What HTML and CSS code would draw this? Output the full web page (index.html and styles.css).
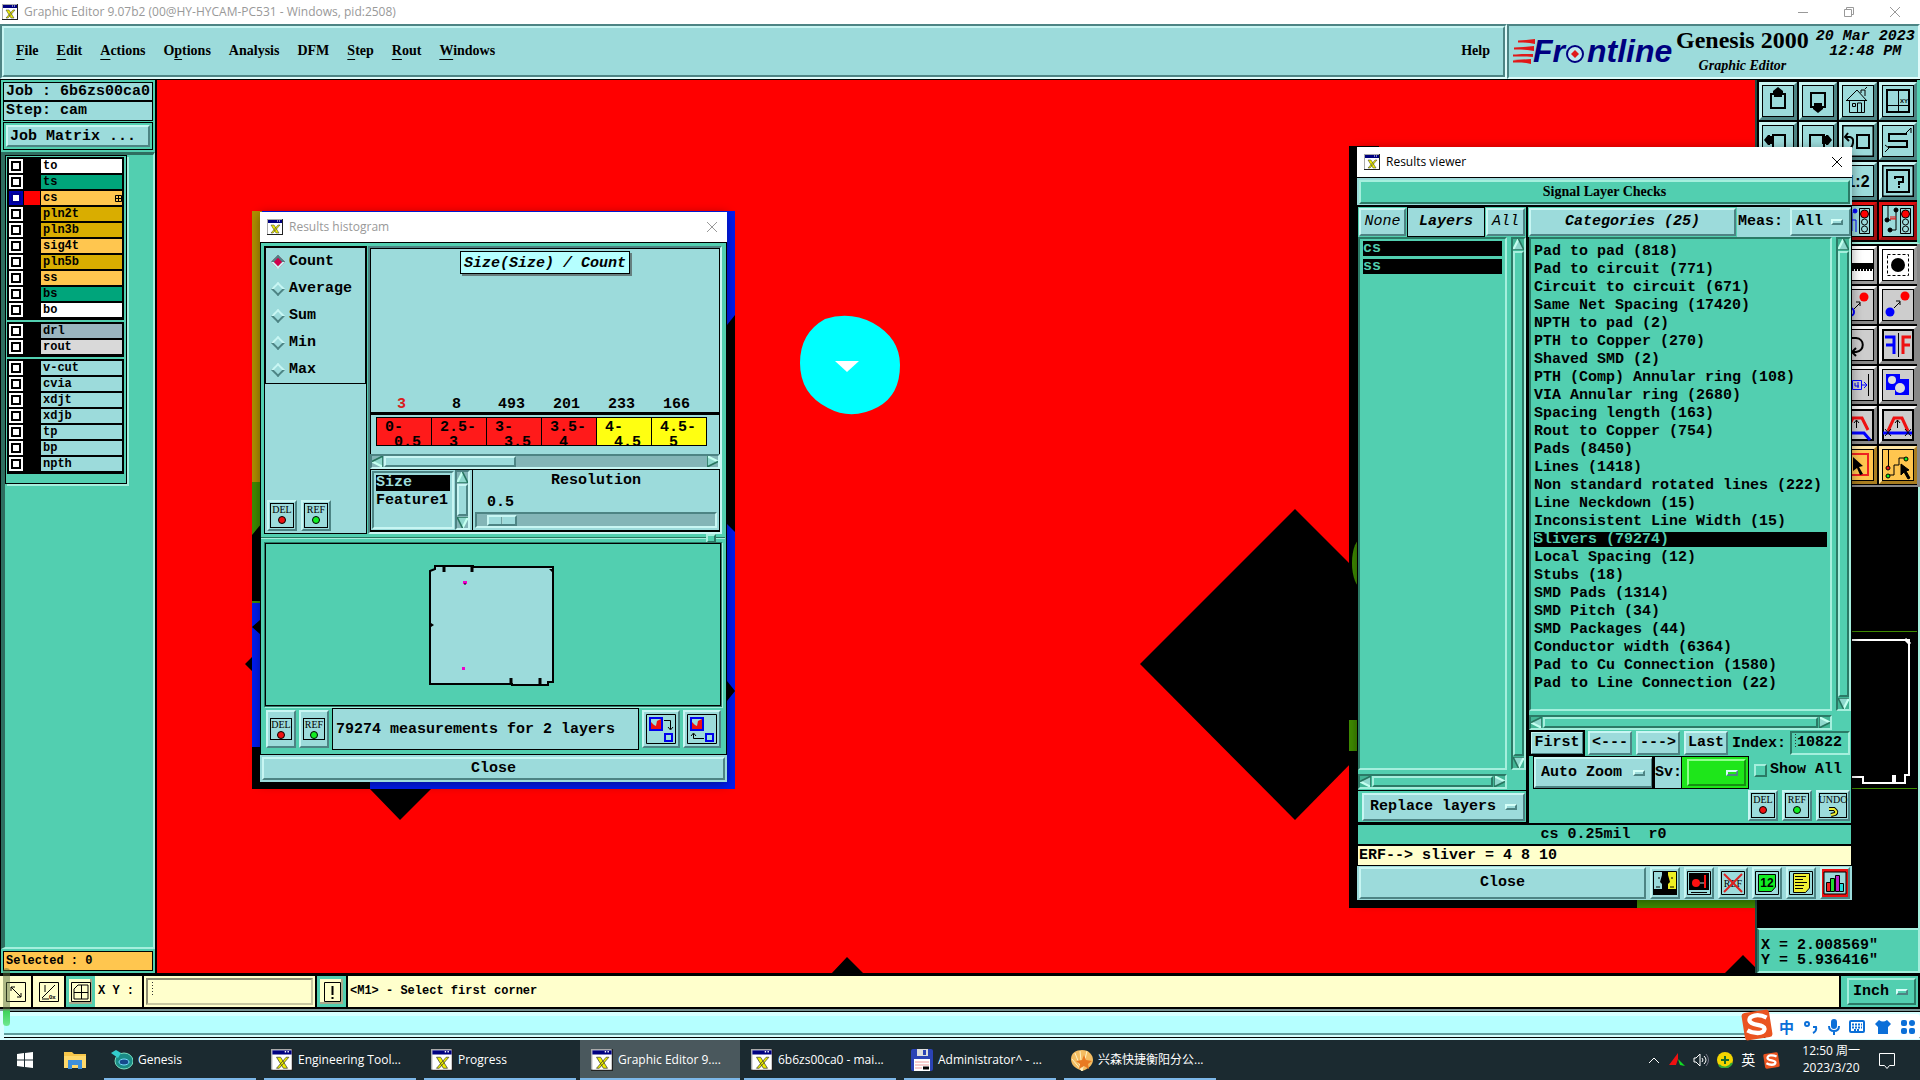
FILE: index.html
```html
<!DOCTYPE html>
<html lang="en">
<head>
<meta charset="utf-8">
<title>Graphic Editor</title>
<link rel="stylesheet" href="styles.css">
</head>
<body>
<svg class="defs" aria-hidden="true">
  <symbol id="xapp" viewBox="0 0 16 16"><rect width="16" height="16" fill="#222"/><rect width="15" height="15" fill="#aaa"/><rect x="1" y="1" width="14" height="14" fill="#fff"/><rect x="1" y="1" width="14" height="3" fill="#000080"/><path d="M10 2h1M12 2h1" stroke="#fff"/><path d="M4 6h3l5 8h-3zM11 6h2l-7 8h-2z" fill="#ee0" stroke="#333" stroke-width=".5"/></symbol>
  <symbol id="close" viewBox="0 0 12 12"><path d="M1 1l10 10M11 1L1 11" stroke="currentColor" fill="none"/></symbol>
  <symbol id="frame" viewBox="0 0 32 32"><rect x=".5" y=".5" width="31" height="31" fill="none" stroke="#000"/></symbol>
  <symbol id="up" viewBox="0 0 10 10"><path d="M5 0L0 10h10z" fill="#8fd8cd"/><path d="M0 10L5 0" stroke="#c4fff0" stroke-width="2"/><path d="M5 0l5 10H0" stroke="#27755f" stroke-width="1.5" fill="none"/></symbol>
  <symbol id="sogou" viewBox="0 0 30 30"><rect x="2" y="2" width="26" height="26" rx="3" fill="#ea5420" transform="rotate(-9 15 15)"/><path d="M24 8C16 4 7 6 8 11s15 3 14 8-11 4-16 1" stroke="#fff" stroke-width="4" fill="none"/></symbol>
</svg>

<div class="titlebar"><svg class="i16"><use href="#xapp"/></svg><span class="cap">Graphic Editor 9.07b2 (00@HY-HYCAM-PC531 - Windows, pid:2508)</span>
  <button aria-label="Minimize"><svg width="12" height="12"><path d="M1 6.5h10" stroke="currentColor"/></svg></button>
  <button aria-label="Restore"><svg width="12" height="12" fill="none" stroke="currentColor"><path d="M1.5 3.5h7v7h-7zM3.500 3V1.500h7v7H9"/></svg></button>
  <button aria-label="Close"><svg width="12" height="12"><use href="#close"/></svg></button>
</div>

<header>
  <div class="well grow"><nav class="menubar raised">
    <button><u>F</u>ile</button><button><u>E</u>dit</button><button><u>A</u>ctions</button><button>O<u>p</u>tions</button><button>Analysis</button><button>DFM</button><button><u>S</u>tep</button><button><u>R</u>out</button><button><u>W</u>indows</button><button class="help">Help</button>
  </nav></div>
  <div class="well brand">
    <svg width="162" height="36" viewBox="0 0 162 36"><g transform="translate(0 6)"><g fill="#e01818"><path d="M5 3L22 1v5zM1 10L21 8v5zM3 16l17 0v3zM0 22l18-1v5z"/></g><path d="M5 3.500h17M1 10.500h20M0 17.500h19M0 23.500h18" stroke="#e01818" stroke-width="2"/><g class="logo"><text x="20" y="24">Fr</text><text x="74" y="24">ntline</text></g><circle cx="62" cy="16" r="8" fill="#bfe9ee" stroke="#000080" stroke-width="2"/><path d="M62 12l4 4-4 4-4-4z" fill="#e01818"/></g></svg>
    <div class="product"><b>Genesis 2000</b><i>Graphic Editor</i></div>
    <div class="clock">20 Mar 2023<br>12:48 PM</div>
  </div>
</header>

<main>
  <aside class="left">
    <div class="info">Job : 6b6zs00ca0</div>
    <div class="info second">Step: cam</div>
    <div class="matrix"><button class="raised">Job Matrix ...</button></div>
    <div class="layerpane">
      <div class="layers">
        <div class="grp">
          <label class="ly white"><input type="checkbox"><i></i><span>to</span></label>
          <label class="ly green"><input type="checkbox"><i></i><span>ts</span></label>
          <label class="ly gold on"><input type="checkbox"><i></i><span>cs<svg width="7" height="7"><path d="M.5.5h6v6h-6zM3.500 0v7M0 3.500h7" fill="none" stroke="#000"/></svg></span></label>
          <label class="ly ochre"><input type="checkbox"><i></i><span>pln2t</span></label>
          <label class="ly ochre"><input type="checkbox"><i></i><span>pln3b</span></label>
          <label class="ly gold"><input type="checkbox"><i></i><span>sig4t</span></label>
          <label class="ly ochre"><input type="checkbox"><i></i><span>pln5b</span></label>
          <label class="ly gold"><input type="checkbox"><i></i><span>ss</span></label>
          <label class="ly green"><input type="checkbox"><i></i><span>bs</span></label>
          <label class="ly white"><input type="checkbox"><i></i><span>bo</span></label>
        </div>
        <div class="grp">
          <label class="ly slate"><input type="checkbox"><i></i><span>drl</span></label>
          <label class="ly grey"><input type="checkbox"><i></i><span>rout</span></label>
        </div>
        <div class="grp">
          <label class="ly"><input type="checkbox"><i></i><span>v-cut</span></label>
          <label class="ly"><input type="checkbox"><i></i><span>cvia</span></label>
          <label class="ly"><input type="checkbox"><i></i><span>xdjt</span></label>
          <label class="ly"><input type="checkbox"><i></i><span>xdjb</span></label>
          <label class="ly"><input type="checkbox"><i></i><span>tp</span></label>
          <label class="ly"><input type="checkbox"><i></i><span>bp</span></label>
          <label class="ly"><input type="checkbox"><i></i><span>npth</span></label>
        </div>
      </div>
    </div>
    <div class="selected">Selected : 0</div>
  </aside>

  <section class="canvas">
    <svg width="100%" height="100%">
      <g transform="translate(-157 -80)">
        <path d="M1140 664L1295 509 1360 574V754L1295 820z"/>
        <path d="M825 319q25-8 48 4 27 15 27 42 0 30-22 42-26 14-50 1-28-14-28-45 0-30 25-44z" fill="#0ff"/>
        <path d="M835 361h24l-12 11z" fill="#fff"/>
        <path d="M831 974l16-17 17 17zM1724 974l19-19 14 14v5zM370 789h61l-31 31zM245 664l7-7v14z"/>
        <path d="M252 211h483v578H252z" fill="#001cf0"/>
        <path d="M252 211h10v271h-10z" fill="#b08e00"/>
        <path d="M252 482h10v60h-10z" fill="#3f8c00"/>
        <path d="M252 535l10-12v78h-10zM252 747h118v42H252zM727 325l8-10v217l-8-8zM252 627l8-7v14zM727 681l8 10-8 10z"/>
        <path d="M252 602h10" stroke="#3f8c00" stroke-width="2"/>
        <path d="M1349 146h30v762h-30zM1349 896h288v12h-288z"/>
        <path d="M1637 896h120v12h-120zM1349 720h10v31h-10z" fill="#3f8c00"/><ellipse cx="1362" cy="563" rx="10" ry="25" fill="#3f8c00"/>
      </g>
    </svg>
  </section>

  <aside class="right">
    <div class="tools">
      <button aria-label="Pan up"><svg class="i32"><use href="#frame"/><path d="M9 9h14v14H9z" fill="none" stroke="#000" stroke-width="2"/><path d="M16 2l5 4v2h-1v4h-8V8h-1V6z"/></svg></button>
      <button aria-label="Pan down"><svg class="i32"><use href="#frame"/><path d="M9 8h14v14H9z" fill="none" stroke="#000" stroke-width="2"/><path d="M16 28l5-4v-2h-1v-4h-8v4h-1v2z"/></svg></button>
      <button aria-label="Home"><svg class="i32" fill="none" stroke="#000"><use href="#frame"/><path d="M4 16L15 5l10 11M7.500 15v12.500h15V15M5 15.500h20M10.500 18.500h3v3h-3zM15.500 27v-9h4v9M19 8V5h4v6M23 4l2-2"/></svg></button>
      <button aria-label="Zoom to XY"><svg class="i32" fill="none" stroke="#000"><use href="#frame"/><path d="M5 5h22v22H5z" stroke-width="2"/><path d="M16.500 5v22M5 20.500h22"/><text x="18" y="18" class="micro">XY</text></svg></button>
      <button aria-label="Pan left"><svg class="i32"><use href="#frame"/><path d="M11 10h12v13H11z" fill="none" stroke="#000" stroke-width="2"/><path d="M2 15l4-5h2v1h4v8H8v1H6z"/></svg></button>
      <button aria-label="Pan right"><svg class="i32"><use href="#frame"/><path d="M8 10h14v13H8z" fill="none" stroke="#000" stroke-width="2"/><path d="M30 15l-4-5h-2v1h-4v8h4v1h2z"/></svg></button>
      <button aria-label="Previous view"><svg class="i32" fill="none" stroke="#000" stroke-width="2"><use href="#frame"/><path d="M15 10h12v13H15zM3 12h5q4 1 3 6t-4 6M6 8l-3 4 4 4"/></svg></button>
      <button aria-label="Serpentine"><svg class="i32" fill="none" stroke="#000"><use href="#frame"/><path d="M25 9H7v7h18v6H6" stroke-width="2"/><path d="M24 8l5-5M29 3v5M7 23l-4 4M3 20l4 3"/></svg></button>
      <button class="c3" aria-label="Zoom ratio"><svg class="i32"><use href="#frame"/><text x="16" y="22" class="ratio">1:2</text></svg></button>
      <button aria-label="Query"><svg class="i32" fill="none" stroke="#000" stroke-width="2"><use href="#frame"/><path d="M5 5h22v22H5zM13 14v-2h8v5h-4v3M17 21v2"/></svg></button>
      <button class="c3 red" aria-label="Net check"><svg class="i32" fill="none" stroke="#000"><use href="#frame"/><path d="M10 7v19H3M10 15h4v12" stroke="#00f"/><circle cx="13" cy="6" r="2" fill="#00f" stroke="#00f"/><path d="M17.500 3.500h10v25h-10z"/><circle cx="22.500" cy="9" r="4" fill="#f00"/><circle cx="22.500" cy="17" r="3"/><circle cx="22.500" cy="24" r="3"/></svg></button>
      <button class="red" aria-label="Layer check"><svg class="i32" fill="none" stroke="#000"><use href="#frame"/><path d="M6 1v14M14 6v19H8M6 15h3"/><path d="M8 14h6M9 11v3M11 11v3M13 11v3" stroke="#e11"/><circle cx="14" cy="5" r="2" fill="#000"/><circle cx="5" cy="15" r="2" fill="#000"/><circle cx="8" cy="25" r="2" fill="#000"/><path d="M18.500 3.500h10v25h-10z"/><circle cx="23.500" cy="9" r="4" fill="#f00"/><circle cx="23.500" cy="17" r="3"/><circle cx="23.500" cy="24" r="3"/></svg></button>
    </div>
    <div class="tools lower">
      <button class="c3 w" aria-label="Measure"><svg class="i32"><use href="#frame"/><path d="M3 20V15h27v5M5 15v7M8 15v7M11 15v7M14 15v7M17 15v7M20 15v7M23 15v7M26 15v7M29 15v7" stroke="#000" stroke-width="2"/></svg></button>
      <button class="w" aria-label="Feature"><svg class="i32"><use href="#frame"/><path d="M5.500 5.500h21v21h-21z" fill="none" stroke="#000" stroke-dasharray="3 2"/><circle cx="16" cy="16" r="7"/></svg></button>
      <button class="c3" aria-label="Copy"><svg class="i32"><use href="#frame"/><circle cx="22" cy="8" r="4.500" fill="#f00"/><circle cx="8" cy="23" r="4" fill="none" stroke="#00f" stroke-width="2"/><path d="M12 20l6-6M14 13h4v4" fill="none" stroke="#000"/></svg></button>
      <button aria-label="Move"><svg class="i32"><use href="#frame"/><circle cx="23" cy="7" r="4.500" fill="#f00"/><circle cx="8" cy="23" r="4.500" fill="#00f"/><path d="M12 19l6-6M14 12h4v4" fill="none" stroke="#000"/></svg></button>
      <button class="c3" aria-label="Rotate"><svg class="i32"><use href="#frame"/><path d="M10 9h4c9 1 9 12 0 14h-3M14 19l-4 4 4 4" fill="none" stroke="#000" stroke-width="2"/></svg></button>
      <button aria-label="Mirror"><svg class="i32" fill="none" stroke-width="3"><use href="#frame"/><path d="M3 8h9v17M4 16h8" stroke="#00f"/><path d="M29 8h-8v17M28 16h-7" stroke="#e11"/><path d="M16.500 4v24" stroke="#000" stroke-width="1"/></svg></button>
      <button class="c3" aria-label="Stretch"><svg class="i32" fill="none" stroke="#00f"><use href="#frame"/><path d="M10.500 11.500h9v9h-9zM2 16h8M20 16h5M22 13l3 3-3 3M13 14v3h4M16 13v6"/><path d="M26.500 5v22" stroke="#000"/></svg></button>
      <button aria-label="Merge"><svg class="i32"><use href="#frame"/><path d="M4 5h14v5h9v16H13v-5H4z" fill="#00f"/><circle cx="10" cy="11" r="4" fill="#ddd"/><circle cx="18" cy="19" r="5" fill="#ddd"/></svg></button>
      <button class="c3" aria-label="Offset"><svg class="i32" fill="none" stroke-width="3"><use href="#frame"/><path d="M2 24h20l6 7" stroke="#00f"/><path d="M4 22l7-13h9l6 12" stroke="#e11"/><path d="M14.500 19v-8M12 14l2.500-3 2.500 3" stroke="#000" stroke-width="1"/></svg></button>
      <button aria-label="Reshape"><svg class="i32" fill="none" stroke-width="3"><use href="#frame"/><path d="M1 24h29" stroke="#00f"/><path d="M6 22l6-13h8l6 13" stroke="#e11"/><path d="M15.500 19v-8M13 14l2.500-3 2.500 3M3 20l6 7M9 20l-6 7M23 20l6 7M29 20l-6 7" stroke="#000" stroke-width="1"/></svg></button>
      <button class="c3 y" aria-label="Select"><svg class="i32"><use href="#frame"/><path d="M4 5h22v21H4z" fill="none" stroke="#e22" stroke-width="2"/><path d="M11 8l10 9-4 1 4 7-3 1-3-7-4 3z"/></svg></button>
      <button class="y" aria-label="Select net"><svg class="i32" fill="none" stroke="#000"><use href="#frame"/><path d="M6.500 1v18M6 26h6V16h5V9h7"/><circle cx="6" cy="19" r="2" fill="#e11"/><circle cx="6" cy="27" r="2" fill="#1e2"/><circle cx="24" cy="10" r="2" fill="#1e2"/><path d="M19 15l8 6-3 1 4 7-2 1-4-7-3 3z" fill="#000"/></svg></button>
    </div>
    <div class="map"><svg width="100%" height="100%" fill="none"><path d="M0 144.500h160M0 301.500h160" stroke="#3f8c00"/><path d="M0 153h152v135h-4v8h-10v-7h-2v7h-30v-6h-14" stroke="#fff" stroke-width="2"/><path d="M148 152l5 5" stroke="#fff" stroke-width="3"/></svg></div>
    <div class="xy">X = 2.008569"<br>Y = 5.936416"</div>
  </aside>
</main>

<div class="status">
  <button class="sb" aria-label="Snap"><svg width="22" height="22" fill="none" stroke="#000"><path d="M1.500 1.500h19v19h-19zM6 6l10 10M6 10V6h4M16 12v4h-4"/></svg></button>
  <button class="sb" aria-label="Scale"><svg width="22" height="22" fill="none" stroke="#000"><path d="M1.500 1.500h19v19h-19zM4 17L17 4M7 4v7M4 18h7"/><text x="11" y="18" class="micro">0x</text></svg></button>
  <button class="sb teal" aria-label="Grid"><svg width="22" height="22" fill="none" stroke="#000"><path d="M1.500 1.500h19v19h-19zM4 8l4-4h10v14H4zM11.500 4v14M4 11.500h14"/></svg></button>
  <label for="xyin" class="xyl">X Y :</label><span class="xybox"><input id="xyin" type="text"></span>
  <button class="sb teal" aria-label="Alert"><svg width="22" height="22" fill="none" stroke="#000"><path d="M3.500 1.500h16v19h-16z"/><path d="M11.500 5v9M11.500 16v2" stroke-width="2"/></svg></button>
  <output class="msg">&lt;M1&gt; - Select first corner</output>
  <div class="unit"><label class="opt raised"><select aria-label="Units"><option>Inch</option></select><i></i></label></div>
</div>
<div class="cyanbar"><div></div></div>

<footer class="taskbar">
  <button class="sq" aria-label="Start"><svg width="16" height="16" fill="#fff"><path d="M0 2l7-1v6.500H0zM8 1l8-1v7.500H8zM0 8.500h7V15l-7-1zM8 8.500h8V16l-8-1z"/></svg></button>
  <button class="sq" aria-label="Files"><svg width="22" height="18"><path d="M0 1h8l2 2h12v14H0z" fill="#f7c64a"/><path d="M0 5h22v12H0z" fill="#ffd96b"/><path d="M4 18V9h14v9h-4v-4H8v4z" fill="#3d8fdc"/></svg></button>
  <button class="task"><svg width="22" height="20"><ellipse cx="13" cy="11" rx="9" ry="8" fill="#1a8c86" stroke="#7be0c0"/><ellipse cx="13" cy="12" rx="5" ry="3" fill="#164a8c" stroke="#7df"/><path d="M0 3l5-3 5 3-3 5z" fill="#3cc"/></svg>Genesis</button>
  <button class="task"><svg class="i22"><use href="#xapp"/></svg>Engineering Tool...</button>
  <button class="task"><svg class="i22"><use href="#xapp"/></svg>Progress</button>
  <button class="task active"><svg class="i22"><use href="#xapp"/></svg>Graphic Editor 9....</button>
  <button class="task"><svg class="i22"><use href="#xapp"/></svg>6b6zs00ca0 - mai...</button>
  <button class="task"><svg class="i22" viewBox="0 0 22 22"><rect width="22" height="22" rx="2" fill="#2b43b5"/><rect x="6" width="11" height="7" fill="#ddd"/><rect x="12" y="1" width="3" height="5" fill="#2b43b5"/><rect x="3" y="10" width="16" height="12" fill="#fff"/><path d="M4 13h14M4 16h14M4 19h7" stroke="#e99"/><path d="M12 19h6" stroke="#000" stroke-width="3"/></svg>Administrator^ - ...</button>
  <button class="task"><svg class="i22" viewBox="0 0 22 22"><path d="M11 1c7 0 11 5 11 10s-5 9-11 11C4 19 0 16 0 10S5 1 11 1z" fill="#f4bd62"/><path d="M11 22L4 4M11 22L9 2M11 22L16 2M11 22L1 10" stroke="#fff0c0"/><path d="M13 6l2 5 6 1-4 3 1 5-5-3-5 3 1-5-4-3 6-1z" fill="#e87a22"/></svg>兴森快捷衡阳分公...</button>
  <div class="tray">
    <svg width="14" height="10"><path d="M2 8l5-5 5 5" fill="none" stroke="#fff"/></svg>
    <svg width="16" height="14"><path d="M0 12L9 0v6l-2 6z" fill="#e11"/><path d="M9 6l7 7-5-1z" fill="#1d2"/></svg>
    <svg width="16" height="14" fill="none" stroke="#fff"><path d="M1 5h2l4-4v12L3 9H1zM9 5q2 2 0 4M11 3q4 4 0 8"/><path d="M13 1q5 6 0 12" stroke="#778"/></svg>
    <svg width="16" height="16"><circle cx="8" cy="8" r="8" fill="#f4d500"/><path d="M2 13a8 8 0 0 0 13-2" stroke="#3a3" stroke-width="2" fill="none"/><path d="M8 4v8M4 8h8" stroke="#186a28" stroke-width="2"/></svg>
    <span class="ime">英</span>
    <svg width="17" height="17"><use href="#sogou"/></svg>
    <div class="time">12:50 周一<br>2023/3/20</div>
    <svg width="18" height="17"><path d="M1.500 1.500h15v12h-5l-2.500 3-2.500-3h-5z" fill="none" stroke="#fff"/></svg>
  </div>
</footer>

<div class="win hist">
  <div class="wtitle dim"><svg class="i16"><use href="#xapp"/></svg><span class="cap">Results histogram</span><button aria-label="Close"><svg width="12" height="12"><use href="#close"/></svg></button></div>
  <div class="hbody">
    <div class="htop">
      <div class="hleft">
        <div class="radios">
          <label><input type="radio" name="stat" checked>Count</label>
          <label><input type="radio" name="stat">Average</label>
          <label><input type="radio" name="stat">Sum</label>
          <label><input type="radio" name="stat">Min</label>
          <label><input type="radio" name="stat">Max</label>
        </div>
        <div class="pair"><button class="ib raised badge">DEL<i class="dot"></i></button><button class="ib raised badge">REF<i class="dot ok"></i></button></div>
      </div>
      <div class="hright">
        <div class="plot">
          <div class="ptitle">Size(Size) / Count</div>
          <div class="vals"><span class="r">3</span><span>8</span><span>493</span><span>201</span><span>233</span><span>166</span></div>
          <div class="bins"><span>0-<b>0.5</b></span><span>2.5-<b>3</b></span><span>3-<b>3.5</b></span><span>3.5-<b>4</b></span><span class="y">4-<b>4.5</b></span><span class="y">4.5-<b>5</b></span></div>
        </div>
        <div class="hs cy"><svg class="l"><use href="#up"/></svg><i class="part"></i><svg class="r"><use href="#up"/></svg></div>
        <div class="hlow">
          <ul class="feat"><li class="sel">Size</li><li>Feature1</li></ul>
          <div class="vs cy"><svg><use href="#up"/></svg><i></i><svg class="d"><use href="#up"/></svg></div>
          <div class="reso"><label for="res">Resolution</label><span>0.5</span><input id="res" type="range" min="0" max="20" value="1"></div>
        </div>
      </div>
    </div>
    <div class="sash"><i></i></div>
    <div class="preview"><svg width="126" height="124" viewBox="0 0 126 124"><path d="M6 3h38v1h80v115h-5v3H83v-1H1V8l5-2z" fill="#9cdbdb" stroke="#000" stroke-width="2"/><path d="M15 3v6M43 3v6M82 115v6M111 115v6" stroke="#000" stroke-width="3"/><path d="M120 6h3v3zM2 60l3 2-3 2zM123 61h1"/><path d="M34 18h4v3h-4zM33 104h3v3h-3z" fill="#e0c"/><path d="M35 21h2" stroke="#000"/></svg></div>
    <div class="hrow">
      <button class="ib tall raised badge">DEL<i class="dot"></i></button><button class="ib tall raised badge">REF<i class="dot ok"></i></button>
      <div class="count">79274 measurements for 2 layers</div>
      <button class="ib wide raised" aria-label="Copy down"><svg width="30" height="30" fill="none"><path d="M.5.5h29v29H.5z" stroke="#000"/><path d="M4 4h12v12H4z" stroke="#00e" stroke-width="2"/><path d="M5 15V8l3 3 2 1 1-5 4-2v10z" fill="#e11"/><path d="M19 20h7v7h-7z" stroke="#00e" stroke-width="2"/><path d="M18 6.500h6.500V15M22 13l2.500 3 2.500-3" stroke="#000"/></svg></button>
      <button class="ib wide raised" aria-label="Copy up"><svg width="30" height="30" fill="none"><path d="M.5.5h29v29H.5z" stroke="#000"/><path d="M4 4h12v12H4z" stroke="#00e" stroke-width="2"/><path d="M5 15V8l3 3 2 1 1-5 4-2v10z" fill="#e11"/><path d="M19 20h7v7h-7z" stroke="#00e" stroke-width="2"/><path d="M17 24.500H6.500V20M4 22l2.500-3L9 22" stroke="#000"/></svg></button>
    </div>
  </div>
  <div class="hclose"><button class="raised">Close</button></div>
</div>

<div class="win res">
  <div class="wtitle"><svg class="i16"><use href="#xapp"/></svg><span class="cap">Results viewer</span><button aria-label="Close"><svg width="12" height="12"><use href="#close"/></svg></button></div>
  <div class="sig"><div class="traised">Signal Layer Checks</div></div>
  <div class="cols">
    <div class="cl">
      <div class="lh"><button class="raised thin">None</button><b>Layers</b><button class="raised thin">All</button></div>
      <div class="area"><div class="stack"><ul class="tlist"><li class="sel">cs</li><li class="sel">ss</li></ul><div class="hs"><svg class="l"><use href="#up"/></svg><i></i><svg class="r"><use href="#up"/></svg></div></div><div class="vs lvs"><svg><use href="#up"/></svg><i></i><svg class="d"><use href="#up"/></svg></div></div>
      <div class="rep"><label class="opt raised"><select aria-label="Layer mode"><option>Replace layers</option></select><i></i></label></div>
    </div>
    <div class="cr">
      <div class="ch"><button class="raised cat">Categories (25)</button><label for="meas">Meas:</label><span class="opt raised"><select id="meas"><option>All</option></select><i></i></span></div>
      <div class="area"><div class="stack"><ul class="tlist"><li>Pad to pad (818)</li><li>Pad to circuit (771)</li><li>Circuit to circuit (671)</li><li>Same Net Spacing (17420)</li><li>NPTH to pad (2)</li><li>PTH to Copper (270)</li><li>Shaved SMD (2)</li><li>PTH (Comp) Annular ring (108)</li><li>VIA Annular ring (2680)</li><li>Spacing length (163)</li><li>Rout to Copper (754)</li><li>Pads (8450)</li><li>Lines (1418)</li><li>Non standard rotated lines (222)</li><li>Line Neckdown (15)</li><li>Inconsistent Line Width (15)</li><li class="sel">Slivers (79274)</li><li>Local Spacing (12)</li><li>Stubs (18)</li><li>SMD Pads (1314)</li><li>SMD Pitch (34)</li><li>SMD Packages (44)</li><li>Conductor width (6364)</li><li>Pad to Cu Connection (1580)</li><li>Pad to Line Connection (22)</li></ul><div class="hs"><svg class="l"><use href="#up"/></svg><i></i><svg class="r"><use href="#up"/></svg></div></div><div class="vs rvs"><svg><use href="#up"/></svg><i></i><svg class="d"><use href="#up"/></svg></div></div>
      <div class="navrow"><button class="raised first">First</button><button class="raised">&lt;---</button><button class="raised">---&gt;</button><button class="raised">Last</button><label for="idx">Index:</label><input id="idx" type="text" value="10822"></div>
      <div class="zrow"><label class="opt raised auto"><select aria-label="Zoom mode"><option>Auto Zoom</option></select><i></i></label><label class="sv" for="svs">Sv:</label><span class="sev"><span class="opt raised"><select id="svs"><option></option></select><i></i></span></span><label class="show"><input type="checkbox">Show All</label></div>
      <div class="drow"><button class="ib raised badge">DEL<i class="dot"></i></button><button class="ib raised badge">REF<i class="dot ok"></i></button><button class="ib undo raised badge">UNDO<svg width="12" height="11"><path d="M2 3h5q4 3 1 5l-4 1" stroke="#000" stroke-width="4" fill="none"/><path d="M2 3h5q4 3 1 5l-4 1" stroke="#ee3" stroke-width="2" fill="none"/></svg></button></div>
    </div>
  </div>
  <div class="line">cs 0.25mil&nbsp; r0</div>
  <div class="erf">ERF--&gt; sliver = 4 8 10</div>
  <div class="rfoot">
    <button class="raised grow">Close</button>
    <button class="ib raised" aria-label="Faces"><svg class="i24" viewBox="0 0 24 24"><path fill="#9cdbdb" d="M0 0h12v24H0z"/><path fill="#ee2" d="M12 0h12v24H12z"/><path d="M9 0h6v4l2 7-2 2v5h9v6H0v-6h9v-5l-2-2 2-7z"/><path d="M5 7h2M18 7h2M3 16h4M17 16h4" stroke="#000"/><path d="M.5.5h23v23H.5z" fill="none" stroke="#000"/></svg></button>
    <button class="ib raised" aria-label="Snapshot"><svg class="i24" viewBox="0 0 24 24"><path d="M.5.5h23v23H.5z" fill="none" stroke="#000"/><path d="M2 2h20v17H2zM4 21h16v1H4z"/><circle cx="9" cy="12" r="4" fill="#f11"/><path d="M13 12h5" stroke="#ccc"/><path d="M18 4v13" stroke="#f11" stroke-width="2"/></svg></button>
    <button class="ib raised" aria-label="No reference"><svg class="i24" viewBox="0 0 24 24"><path d="M.5.5h23v23H.5z" fill="none" stroke="#000"/><text x="12" y="16" class="tiny">REF</text><path d="M3 3l18 18M21 3L3 21" stroke="#d22" stroke-width="2"/></svg></button>
    <button class="ib raised" aria-label="Numbers"><svg class="i24" viewBox="0 0 24 24"><path d="M.5.5h23v23H.5z" fill="none" stroke="#000"/><path d="M3.500 3.500h17V16l-4 4.500h-13z" fill="#1e2" stroke="#000"/><text x="12" y="16" class="num">12</text></svg></button>
    <button class="ib raised" aria-label="Notes"><svg class="i24" viewBox="0 0 24 24"><path d="M.5.5h23v23H.5z" fill="none" stroke="#000"/><path d="M4.500 2.500h16V17l-4 4.500h-12z" fill="#ee3" stroke="#000"/><path d="M6 5.500h11M6 8.500h8M6 11.500h12M6 14.500h9M6 17.500h8" stroke="#000"/></svg></button>
    <button class="ib raised chart" aria-label="Chart"><svg class="i24" viewBox="0 0 24 24"><path d="M1 1h22v22H1z" fill="#9cdbdb" stroke="#000"/><g stroke="#000"><path d="M3.500 11.500h4v9h-4z" fill="#e22"/><path d="M7.500 7.500h4v13h-4z" fill="#2d3"/><path d="M12.500 4.500h4v16h-4z" fill="#b2c"/><path d="M16.500 12.500h4v8h-4z" fill="#2dd"/></g></svg></button>
  </div>
</div>

<div class="pill"></div>
<div class="sogoubar">
  <svg class="big"><use href="#sogou"/></svg>
  <span class="zh">中</span>
  <svg width="14" height="14"><circle cx="3" cy="4" r="2" fill="none" stroke="#0b6fd8" stroke-width="2"/><path d="M9 7h3q1 4-3 6" stroke="#0b6fd8" stroke-width="2" fill="none"/></svg>
  <svg width="12" height="16" fill="none" stroke="#0b6fd8" stroke-width="2"><rect x="4" y="1" width="4" height="8" rx="2" fill="#0b6fd8"/><path d="M1 7q0 5 5 5t5-5M6 12v4"/></svg>
  <svg width="16" height="13"><rect x="1" y="1" width="14" height="11" rx="1" fill="none" stroke="#0b6fd8" stroke-width="2"/><path d="M3 4.500h10M3 7.500h10M5 10h6" stroke="#0b6fd8" stroke-dasharray="2 1" stroke-width="2"/></svg>
  <svg width="16" height="14"><path d="M4 0q4 3 8 0l4 4-3 3v7H3V7L0 4z" fill="#0b6fd8"/></svg>
  <svg width="14" height="14" fill="#0b6fd8"><rect width="6" height="6" rx="2"/><rect x="8" width="6" height="6" rx="3"/><rect y="8" width="6" height="6" rx="2"/><rect x="8" y="8" width="6" height="6" rx="2"/></svg>
</div>
</body>
</html>
```
FILE: styles.css
```css
:root { --cy: #9cdbdb; --teal: #52cfb0; --hi: #c8f6f3; --lo: #4d8484; --thi: #a5efdd; --tlo: #2b7a66; --cream: #ffffcc; --gold: #ffc64f; }
* { box-sizing: border-box; }
body { margin: 0; height: 100vh; display: flex; flex-direction: column; overflow: hidden; position: relative; background: #000; color: #000; font: bold 15px/18px "Liberation Mono", monospace; }
button, input, select { font: inherit; color: inherit; background: none; border: 0; padding: 0; margin: 0; border-radius: 0; }
select, input { appearance: none; min-width: 0; }
ul { list-style: none; margin: 0; padding: 0; }
svg { display: block; flex: none; }
.defs { position: absolute; width: 0; height: 0; }
.grow { flex: 1; }
.i16 { width: 16px; height: 16px; }
.i22 { width: 22px; height: 22px; }
.i24 { width: 24px; height: 24px; }
.i32 { width: 32px; height: 32px; }
.tiny { font: 10px "Liberation Serif", serif; text-anchor: middle; }
.micro { font: bold 6px "Liberation Sans", sans-serif; fill: #000; stroke: none; }
.ratio { font: bold 16px "Liberation Sans", sans-serif; text-anchor: middle; }
.num { font: bold 12px "Liberation Sans", sans-serif; text-anchor: middle; }
.raised { border: 2px solid; border-color: var(--hi) var(--lo) var(--lo) var(--hi); background: var(--cy); }
.traised { border: 2px solid; border-color: var(--thi) var(--tlo) var(--tlo) var(--thi); background: var(--teal); }

.titlebar { height: 24px; flex: none; background: #fff; color: #999; display: flex; align-items: center; padding: 0 2px; }
.cap { font: 12px/16px "Open Sans", sans-serif; flex: 1; padding-left: 6px; white-space: nowrap; }
.titlebar button { width: 46px; display: flex; justify-content: center; }

header { display: flex; height: 56px; flex: none; border-bottom: 1px solid #000; background: var(--cy); }
.well { border: 2px solid; border-color: var(--lo) #e0fbfa #e0fbfa var(--lo); display: flex; background: var(--cy); }
.menubar { flex: 1; display: flex; align-items: center; gap: 18px; padding: 0 13px 2px 12px; }
.menubar button { font: bold 14px/18px "Liberation Serif", serif; }
.menubar u { text-underline-offset: 4px; }
.menubar .help { margin-left: auto; }
.brand { width: 413px; padding-left: 4px; }
.brand svg { margin-top: 6px; }
.logo { font: italic bold 32px "Liberation Sans", sans-serif; fill: #000080; }
.product { display: flex; flex-direction: column; align-items: center; font-family: "Liberation Serif", serif; white-space: nowrap; margin-left: 1px; }
.product b { font-size: 24px; line-height: 28px; }
.product i { font-size: 14px; line-height: 24px; }
.clock { flex: 1; font-style: italic; font-size: 15px; line-height: 15px; text-align: center; padding: 3px 0 0 4px; white-space: nowrap; }

main { flex: 1; min-height: 0; display: flex; border-bottom: 3px solid #000; }
.left { width: 157px; flex: none; background: var(--teal); border-right: 2px solid #000; border-left: 1px solid #000; padding: 2px; display: flex; flex-direction: column; }
.info { border: 1px solid #000; height: 19px; line-height: 18px; background: var(--cy); padding-left: 2px; white-space: nowrap; }
.info.second { height: 20px; }
.matrix { border: 1px solid #000; padding: 2px; margin: 1px 0 2px; height: 28px; display: flex; }
.matrix button { flex: 1; text-align: left; padding: 1px 0 0 2px; line-height: 18px; }
.layerpane { flex: 1; margin: 0 -2px; border-left: 4px solid #2f6e60; border-top: 3px solid #2f6e60; border-right: 2px solid var(--thi); border-bottom: 2px solid var(--thi); }
.layers { width: 122px; border: 1px solid #000; box-shadow: 2px 2px 0 var(--thi); padding: 1px 2px 9px 1px; display: flex; flex-direction: column; gap: 2px; }
.grp { background: #000; padding: 2px 2px 0; border-bottom: 1px solid #000; }
.ly { display: grid; grid-template-columns: 14px 16px 1fr; column-gap: 1px; height: 16px; padding-bottom: 2px; font-size: 12px; line-height: 14px; }
.ly input { width: 14px; height: 14px; background: #fff; border: 2px solid #fff; outline: 2px solid #000; outline-offset: -4px; }
.ly span { background: var(--cy); padding-left: 2px; display: flex; justify-content: space-between; align-items: center; overflow: hidden; }
.ly.white span { background: #fff; }
.ly.green span { background: #00a57b; }
.ly.gold span { background: var(--gold); }
.ly.ochre span { background: #d9ad00; }
.ly.slate span { background: #9ab5bf; }
.ly.grey span { background: #d9d9d9; }
.ly.on i { background: #f00; }
.ly.on input { border: 3px solid #0000b0; outline-color: #000090; }
.selected { border: 1px solid #000; background: var(--gold); height: 20px; margin-top: 2px; padding-left: 2px; font-size: 12px; line-height: 18px; }

.canvas { flex: 1; min-width: 0; background: #f00; }
.canvas svg { width: 100%; height: 100%; }
.right { width: 165px; flex: none; background: #000; border-left: 2px solid #204c42; display: flex; flex-direction: column; }
.tools { display: grid; grid-template-columns: repeat(4, 38px); gap: 2px; padding: 2px 0 2px 2px; border-right: 3px solid var(--teal); border-bottom: 2px solid var(--thi); }
.tools button { width: 38px; height: 38px; border: 3px solid; border-color: var(--hi) var(--lo) var(--lo) var(--hi); background: var(--cy); }
.tools .c3 { grid-column: 3; }
.tools .red { border-color: #e01010 #a01010 #a01010 #e01010; }
.tools.lower { border-right-color: #888; border-bottom-color: #888; padding: 2px 0 1px 2px; }
.lower button { background: #cdcdcd; border-color: #f4f4f4 #888 #888 #f4f4f4; }
.lower .w { background: #fff; border-color: #fff #999 #999 #fff; }
.lower .y { background: var(--gold); border-color: #ffe6a4 #a87d20 #a87d20 #ffe6a4; }
.map { flex: 1; min-height: 0; border-right: 2px solid var(--thi); }
.xy { height: 45px; border: 2px solid; border-color: var(--thi) var(--thi) var(--thi) var(--tlo); background: var(--teal); padding: 8px 2px 0; line-height: 15px; }

.status { height: 33px; flex: none; display: flex; background: #000; border-bottom: 2px solid #000; gap: 2px; font-size: 12px; }
.sb { width: 31px; background: var(--cream); border: 2px solid #c4c49a; outline: 2px solid var(--cream); outline-offset: -2px; display: flex; align-items: center; justify-content: center; }
.sb.teal { width: 29px; border: 3px solid var(--teal); outline: 0; box-shadow: inset -2px -2px #aaa98c; }
.xyl { background: var(--cream); width: 47px; line-height: 31px; padding-left: 3px; margin-left: -2px; white-space: nowrap; }
.xybox { width: 171px; background: var(--cream); padding: 2px; display: flex; }
.xybox input { flex: 1; border: 2px solid; border-color: #8d8d72 #c9c9a2 #c9c9a2 #8d8d72; background: repeating-linear-gradient(#333 0 1px, transparent 1px 3px) 4px 2px / 1px 15px no-repeat; }
.msg { flex: 1; background: var(--cream); line-height: 31px; padding-left: 2px; }
.unit { width: 79px; background: var(--teal); padding: 2px 2px 2px 6px; display: flex; border-right: 2px solid #000; font-size: 15px; }
.unit .opt { flex: 1; background: var(--teal); border-color: var(--thi) var(--tlo) var(--tlo) var(--thi); }
.opt { display: flex; align-items: center; justify-content: space-between; padding: 0 6px 0 4px; }
.opt select { flex: 1; }
.opt i { width: 12px; height: 6px; flex: none; border: 2px solid; border-color: #d4fff8 var(--lo) var(--lo) #d4fff8; }
.cyanbar { height: 31px; flex: none; background: #d8fdff; border-top: 2px solid #7b9494; padding: 1px 0 3px 4px; display: flex; }
.cyanbar div { flex: 1; background: #b5ffff; border-top: 4px solid #d8ffff; border-bottom: 2px solid #5f9c9c; box-shadow: 0 2px #d8ffff, 0 3px #000, 0 -1px #000; height: 23px; }

.taskbar { height: 40px; flex: none; display: flex; background: #1b2a30; color: #fff; font: 12px/16px "Open Sans", "Noto Sans CJK SC", sans-serif; }
.sq { width: 50px; display: flex; align-items: center; justify-content: center; }
.task { flex: 0 1 160px; min-width: 0; display: flex; align-items: center; gap: 5px; padding-left: 11px; white-space: nowrap; background: linear-gradient(#7cb7e8, #7cb7e8) 4px 100% / 152px 2px no-repeat; }
.task.active { background: linear-gradient(#7cb7e8, #7cb7e8) 0 100% / 100% 2px no-repeat #4a585d; }
.tray { margin-left: auto; display: flex; align-items: center; gap: 8px; padding-right: 24px; }
.ime { font-size: 14px; }
.time { text-align: center; line-height: 17px; padding: 0 10px 2px 14px; white-space: nowrap; }

.win { position: absolute; display: flex; flex-direction: column; background: var(--teal); box-shadow: 0 2px 10px rgba(0, 0, 0, .4); }
.wtitle { height: 30px; flex: none; background: #fff; display: flex; align-items: center; padding-left: 7px; }
.wtitle.dim { color: #999; }
.wtitle button { width: 30px; display: flex; justify-content: center; }
.ib { width: 30px; height: 31px; flex: none; display: flex; align-items: center; justify-content: center; }
.badge { flex-direction: column; font: 10px/11px "Liberation Serif", serif; outline: 1px solid #000; outline-offset: -4px; justify-content: flex-start; padding-top: 2px; gap: 1px; }
.dot { width: 8px; height: 8px; border: 1px solid #000; border-radius: 50%; background: #e11; }
.dot.ok { background: #1e2; }

.hist { left: 260px; top: 212px; width: 467px; height: 570px; }
.hbody { flex: 1; min-height: 0; border: 1px solid #000; border-bottom: 0; padding: 3px 4px 4px 3px; display: flex; flex-direction: column; }
.htop { display: flex; height: 288px; gap: 1px; }
.hleft { width: 103px; background: var(--cy); border: 1px solid #000; display: flex; flex-direction: column; justify-content: space-between; }
.radios { border: 1px solid #000; padding: 0 0 0 7px; }
.radios label { display: flex; align-items: center; gap: 6px; height: 27px; }
.radios input { width: 10px; height: 10px; border: 2px solid; border-color: var(--hi) var(--lo) var(--lo) var(--hi); transform: rotate(45deg); }
.radios input:checked { background: #d0004c; border-color: var(--lo) var(--hi) var(--hi) var(--lo); }
.pair { display: flex; gap: 4px; padding: 0 2px 2px; }
.hright { flex: 1; min-width: 0; background: var(--cy); border: 2px solid; border-color: var(--lo) var(--hi) var(--hi) var(--lo); display: flex; flex-direction: column; }
.plot { border: 1px solid #000; border-bottom: 0; flex: 1; display: flex; flex-direction: column; }
.ptitle { align-self: center; margin-top: 2px; border: 1px solid #000; background: #b5ffff; box-shadow: 2px 2px #667f7f; font-style: italic; padding: 1px 3px; height: 23px; line-height: 21px; white-space: nowrap; }
.vals { margin-top: auto; display: flex; padding: 0 16px 0 3px; border-bottom: 3px solid #000; height: 19px; }
.vals span { flex: 0 0 55px; text-align: center; line-height: 17px; }
.vals .r { color: #d82020; }
.bins { margin: 2px 0 8px 5px; width: 331px; display: flex; border: 1px solid #000; background: #000; gap: 1px; height: 29px; line-height: 15px; }
.bins span { flex: 1; background: #ff1a1a; padding: 2px 0 0 8px; min-width: 0; white-space: nowrap; }
.bins b { display: block; padding-left: 9px; }
.bins .y { background: #ff1; }
.hlow { height: 63px; display: flex; border: 1px solid #000; border-bottom-width: 2px; }
.feat { width: 82px; margin: 1px; border: 2px solid; border-color: var(--lo) var(--hi) var(--hi) var(--lo); padding: 2px; white-space: nowrap; }
.feat li { line-height: 16px; margin-bottom: 2px; }
.sel { background: #000; color: var(--teal); }
.feat .sel { color: var(--cy); }
.reso { flex: 1; margin-left: 2px; border-left: 1px solid #000; padding: 2px 2px 2px 2px; display: flex; flex-direction: column; }
.reso label { text-align: center; }
.reso span { padding: 4px 0 0 12px; }
.reso input { width: 100%; height: 17px; margin-top: auto; background: #83b5b7; border: 2px solid; border-color: var(--lo) var(--hi) var(--hi) var(--lo); padding: 0; }
.reso input::-webkit-slider-thumb { appearance: none; width: 30px; height: 11px; border: 2px solid; border-color: var(--hi) var(--lo) var(--lo) var(--hi); background: linear-gradient(90deg, var(--cy) 12px, var(--lo) 12px, var(--hi) 14px, var(--cy) 14px); }
.hs { height: 15px; flex: none; display: flex; align-items: center; gap: 1px; background: #42b595; border: 2px solid; border-color: var(--tlo) var(--thi) var(--thi) var(--tlo); }
.hs svg, .vs svg { width: 11px; height: 11px; }
.hs .l { transform: rotate(-90deg); }
.hs .r { transform: rotate(90deg); margin-left: auto; }
.hs i { flex: 1; height: 11px; background: var(--teal); border: 2px solid; border-color: var(--thi) var(--tlo) var(--tlo) var(--thi); }
.hs .part { flex: 0 0 132px; }
.vs { width: 15px; flex: none; display: flex; flex-direction: column; gap: 1px; background: #42b595; border: 2px solid; border-color: var(--tlo) var(--thi) var(--thi) var(--tlo); }
.vs i { flex: 1; width: 11px; background: var(--teal); border: 2px solid; border-color: var(--thi) var(--tlo) var(--tlo) var(--thi); }
.vs .d { transform: rotate(180deg); }
.cy { background: #83b5b7; border-color: var(--lo) var(--hi) var(--hi) var(--lo); }
.cy i { background: var(--cy); border-color: var(--hi) var(--lo) var(--lo) var(--hi); }
.sash { height: 9px; flex: none; margin: 0 -3px; background: linear-gradient(transparent 3px, #27755f 3px, #27755f 4px, var(--thi) 4px, var(--thi) 5px, transparent 5px); display: flex; justify-content: flex-end; padding-right: 9px; }
.sash i { width: 10px; height: 9px; background: var(--teal); border: 2px solid; border-color: var(--thi) var(--tlo) var(--tlo) var(--thi); }
.preview { flex: 1; min-height: 0; border: 1px solid #000; outline: 1px solid var(--tlo); box-shadow: 1px 1px 0 1px var(--thi); margin: 0 1px 2px; display: flex; justify-content: center; align-items: center; padding-right: 2px; }
.hrow { display: flex; height: 42px; align-items: center; gap: 3px; padding: 0 1px 0 2px; }
.hrow .tall { height: 38px; outline: 0; background: linear-gradient(#000, #000) 2px 6px / 22px 1px no-repeat, linear-gradient(#000, #000) 2px 27px / 22px 1px no-repeat, linear-gradient(#000, #000) 2px 6px / 1px 22px no-repeat, linear-gradient(#000, #000) 23px 6px / 1px 22px no-repeat, var(--cy); padding-top: 7px; }
.hrow .wide { width: 38px; height: 38px; }
.count { flex: 1; height: 42px; border: 1px solid #000; background: var(--cy); line-height: 42px; padding-left: 3px; white-space: nowrap; overflow: hidden; }
.hclose { height: 28px; flex: none; background: var(--cy); border-top: 1px solid #000; padding: 2px; display: flex; }
.hclose button { flex: 1; line-height: 18px; }

.res { left: 1357px; top: 147px; width: 495px; height: 753px; }
.sig { border-top: 1px solid #000; border-bottom: 2px solid #000; background: var(--cy); padding: 2px; height: 30px; flex: none; text-align: center; font: bold 14px/20px "Liberation Serif", serif; }
.cols { flex: 1; min-height: 0; display: flex; border-left: 1px solid #000; border-right: 1px solid #000; }
.cl { width: 171px; flex: none; border-right: 3px solid #000; display: flex; flex-direction: column; }
.lh { height: 30px; background: #000; padding: 1px; display: flex; gap: 2px; font-style: italic; }
.lh b { flex: 1; background: var(--cy); text-align: center; line-height: 28px; }
.lh button { width: 47px; outline: 1px solid var(--teal); }
.lh button:last-child { width: 39px; }
.thin { font-weight: normal; font-style: italic; }
.area { flex: 1; min-height: 0; display: flex; }
.stack { flex: 1; min-width: 0; display: flex; flex-direction: column; gap: 4px; }
.tlist { flex: 1; min-height: 0; border: 2px solid; border-color: var(--tlo) var(--thi) var(--thi) var(--tlo); padding: 2px 3px 0; overflow: hidden; }
.tlist li { line-height: 15px; margin: 0 0 3px; white-space: nowrap; }
.lvs, .rvs { margin: 0 0 19px 4px; }
.rep { height: 33px; margin-top: 1px; border-top: 1px solid #000; border-bottom: 1px solid #000; padding: 2px 1px 1px 4px; display: flex; }
.rep .opt { flex: 1; padding-left: 6px; }
.cr { flex: 1; min-width: 0; display: flex; flex-direction: column; }
.ch { height: 30px; display: flex; background: var(--cy); padding: 1px 0; }
.cat { width: 207px; font-style: italic; outline: 1px solid var(--teal); }
.ch label { line-height: 28px; padding-left: 2px; flex: 1; }
.ch .opt { width: 61px; }
.cr .tlist { padding-top: 5px; }
.navrow { display: flex; height: 26px; gap: 4px; padding: 1px; }
.navrow button { width: 44px; }
.navrow .first { width: 54px; outline: 2px solid #000; outline-offset: -1px; }
.navrow label { line-height: 25px; }
.navrow input { flex: 1; border: 2px solid; border-color: var(--tlo) var(--thi) var(--thi) var(--tlo); padding-left: 5px; background: repeating-linear-gradient(#333 0 1px, transparent 1px 3px) 3px 1px / 1px 15px no-repeat; }
.zrow { display: flex; height: 33px; }
.auto { width: 119px; outline: 1px solid #000; margin: 1px 0 1px 5px; padding-left: 5px; }
.sv { width: 28px; margin: 1px 0; background: var(--cy); border-left: 2px solid #000; line-height: 32px; outline: 1px solid #000; }
.sev { width: 68px; background: #1ee61a; border: 1px solid #000; padding: 2px 2px 2px 5px; display: flex; }
.sev .opt { flex: 1; background: #1ee61a; border-color: #8fff8c #158f12 #158f12 #8fff8c; }
.show { display: flex; align-items: center; gap: 3px; padding: 0 0 5px 5px; white-space: nowrap; }
.show input { width: 13px; height: 13px; border: 2px solid; border-color: var(--thi) var(--tlo) var(--tlo) var(--thi); }
.drow { display: flex; justify-content: flex-end; gap: 4px; padding: 1px; height: 34px; }
.undo { width: 34px; }
.line, .erf { border: 1px solid #000; border-width: 2px 1px 0; height: 21px; line-height: 20px; flex: none; }
.line { text-align: center; padding-right: 2px; }
.erf { background: var(--cream); padding-left: 1px; }
.rfoot { border-top: 1px solid #000; background: var(--cy); height: 35px; flex: none; padding: 1px 2px; display: flex; gap: 4px; }
.rfoot .ib { height: 32px; }
.rfoot .chart { background: #e11; }
.pill { position: absolute; left: 3px; top: 968px; width: 7px; height: 58px; border-radius: 4px; background: linear-gradient(rgba(90, 110, 60, .5) 70%, #3fd35a 75%, #6fe890); }
.sogoubar { position: absolute; right: 0; top: 1014px; width: 155px; height: 25px; background: #fff; display: flex; align-items: center; justify-content: space-between; padding: 0 5px 0 14px; border-radius: 3px; }
.sogoubar .big { position: absolute; left: -24px; top: -5px; width: 32px; height: 32px; }
.zh { font: bold 15px/20px "Noto Sans CJK SC", sans-serif; color: #0b6fd8; }
```
